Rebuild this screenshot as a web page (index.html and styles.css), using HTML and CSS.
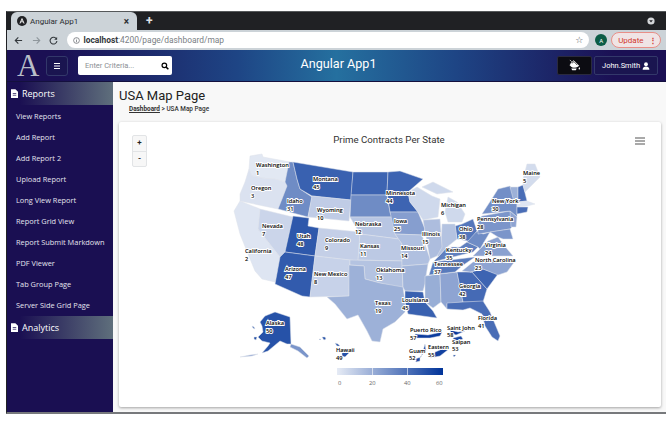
FILE: index.html
```html
<!DOCTYPE html>
<html>
<head>
  <title>Angular App1</title>
  <link rel="stylesheet" href="styles.css">
</head>
<body>
  <div class="window">
    <div class="tabstrip">
      <div class="tab">
        <svg class="tab-icon" viewBox="0 0 10 10"><circle cx="5" cy="5" r="5" fill="#202124"/><path d="M5 1.8 7.6 7.6H6.6L6.1 6.3H3.9L3.4 7.6H2.4ZM5 3.8 4.3 5.5H5.7Z" fill="#fff"/></svg>
        <span class="tab-title">Angular App1</span>
        <span class="tab-close">&#215;</span>
      </div>
      <span class="tab-new">+</span>
      <svg class="chrome-menu" viewBox="0 0 8 8"><circle cx="4" cy="4" r="3.6" fill="#d5d7da"/><path d="M2.2 3.2H5.8L4 5.4Z" fill="#202124"/></svg>
    </div>

    <div class="toolbar">
      <svg class="nav-icon" viewBox="0 0 10 10"><path d="M9 5H1.5M4.8 1.6 1.4 5 4.8 8.4" fill="none" stroke="#33383c" stroke-width="1.2"/></svg>
      <svg class="nav-icon" viewBox="0 0 10 10"><path d="M1 5H8.5M5.2 1.6 8.6 5 5.2 8.4" fill="none" stroke="#8f979c" stroke-width="1.2"/></svg>
      <svg class="nav-icon" viewBox="0 0 10 10"><path d="M8.4 3.4A3.8 3.8 0 1 0 8.8 5.6" fill="none" stroke="#33383c" stroke-width="1.2"/><path d="M9 1V4.2H5.8Z" fill="#33383c"/></svg>
      <div class="omnibox">
        <svg class="info-icon" viewBox="0 0 8 8"><circle cx="4" cy="4" r="3.3" fill="none" stroke="#5f6368" stroke-width=".8"/><path d="M4 3.4V6M4 2V2.8" stroke="#5f6368" stroke-width=".8"/></svg>
        <span class="url"><b>localhost</b>:4200/page/dashboard/map</span>
        <span class="star">&#9734;</span>
      </div>
      <span class="avatar">A</span>
      <span class="update">Update<span class="update-dots">&#8942;</span></span>
    </div>

    <div class="header">
      <span class="logo">A</span>
      <button class="menu-btn">
        <svg viewBox="0 0 8 8"><path d="M1 1.5H7M1 4H7M1 6.5H7" stroke="#fff" stroke-width="1.1"/></svg>
      </button>
      <div class="search">
        <span class="search-text">Enter Criteria...</span>
        <svg viewBox="0 0 10 10"><circle cx="4.2" cy="4.2" r="2.9" fill="none" stroke="#000" stroke-width="1.5"/><path d="M6.4 6.4 9.2 9.2" stroke="#000" stroke-width="1.8"/></svg>
      </div>
      <h1 class="app-title">Angular App1</h1>
      <button class="theme-btn">
        <svg viewBox="0 0 14 14"><path d="M2 1 4 3M3.5 4.4 6.2 1.8 11.6 7.2C9 9.4 4 9.8 2.2 6.6Z" fill="#fff" stroke="#fff" stroke-width=".8"/><path d="M4.2 4.6 6.4 2.8 10 6.6" fill="none" stroke="#000" stroke-width=".7"/><path d="M12.2 8.6C13.2 10 13.4 11.4 12.2 11.4 11 11.4 11.2 10 12.2 8.6ZM3.5 10.2H9.4L8.4 12H4.6Z" fill="#fff"/></svg>
      </button>
      <button class="user-btn">
        John.Smith
        <svg viewBox="0 0 10 10"><circle cx="5" cy="2.8" r="2.4" fill="#fff"/><path d="M.8 9.6C.8 6.6 2.6 5.6 5 5.6S9.2 6.6 9.2 9.6Z" fill="#fff"/></svg>
      </button>
    </div>

    <div class="content">
      <div class="sidebar">
        <div class="side-group">
          <svg viewBox="0 0 8 10"><path d="M0 0H5L8 3V10H0Z" fill="#fff"/><path d="M2 5H6M2 7H6" stroke="#1a0f52" stroke-width=".8"/></svg>
          Reports
        </div>
        <a class="side-link">View Reports</a>
        <a class="side-link">Add Report</a>
        <a class="side-link">Add Report 2</a>
        <a class="side-link">Upload Report</a>
        <a class="side-link">Long View Report</a>
        <a class="side-link">Report Grid View</a>
        <a class="side-link">Report Submit Markdown</a>
        <a class="side-link">PDF Viewer</a>
        <a class="side-link">Tab Group Page</a>
        <a class="side-link">Server Side Grid Page</a>
        <div class="side-group">
          <svg viewBox="0 0 8 10"><path d="M0 0H5L8 3V10H0Z" fill="#fff"/><path d="M2 5H6M2 7H6" stroke="#1a0f52" stroke-width=".8"/></svg>
          Analytics
        </div>
      </div>

      <div class="main">
        <h2 class="page-title">USA Map Page</h2>
        <div class="crumbs"><a>Dashboard</a> &gt; USA Map Page</div>
        <div class="card">
          <div class="zoom-btns">
            <span class="zoom-btn">+</span>
            <span class="zoom-btn">-</span>
          </div>
          <svg class="chart-menu" viewBox="0 0 10 8"><path d="M0 1H10M0 4H10M0 7H10" stroke="#555" stroke-width="1.1"/></svg>

          <svg class="map" viewBox="119 123 542 284" width="542" height="284">
            <defs>
              <linearGradient id="legend-fill">
                <stop offset="0" stop-color="#e6ebf5"/>
                <stop offset="1" stop-color="#003399"/>
              </linearGradient>
            </defs>
            <text class="chart-title" x="389" y="144">Prime Contracts Per State</text>

            <g class="states">
              <polygon fill="#e2e8f3" points="250,157 262,155 263,158 290,163 285,183 275,180 262,179 252,177 249,170"/>
              <polygon fill="#dbe2f0" points="249,170 252,177 262,179 275,180 285,183 287,187 282,200 278,210 240,202 240,195 245,183"/>
              <polygon fill="#dee5f2" points="240,202 260,210 258,230 280,258 275,283 262,280 255,272 248,255 240,235 234,212"/>
              <polygon fill="#cbd5ea" points="260,210 293,218 285,253 280,258 258,230"/>
              <polygon fill="#6f8cc5" points="289,163 293,163 297,180 300,190 312,198 308,218 278,210 282,200 287,187 285,183"/>
              <polygon fill="#3961b0" points="293,163 353,173 351,201 312,197 300,190 297,180"/>
              <polygon fill="#c0cce6" points="312,197 351,201 349,222 308,218"/>
              <polygon fill="#2e58ab" points="293,217 309,219 308,227 319,229 315,257 285,253"/>
              <polygon fill="#c4cfe7" points="319,229 360,233 358,262 315,257"/>
              <polygon fill="#325bad" points="285,253 315,257 310,298 302,297 275,285 280,258"/>
              <polygon fill="#c7d2e9" points="315,257 350,261 349,297 310,298"/>
              <polygon fill="#3d64b2" points="353,173 388,173 387,196 351,196"/>
              <polygon fill="#6f8cc5" points="351,196 387,196 390,213 392,218 350,218"/>
              <polygon fill="#b8c6e3" points="350,218 392,218 395,235 399,240 360,235"/>
              <polygon fill="#bcc9e4" points="360,235 399,240 402,245 402,262 358,261"/>
              <polygon fill="#b4c3e1" points="350,261 402,262 403,290 380,284 365,280 364,267 350,266"/>
              <polygon fill="#9db1d8" points="349,266 364,267 365,280 380,284 403,288 405,303 405,313 395,323 383,330 380,343 372,342 367,332 358,316 347,320 335,305 327,298 349,297"/>
              <polygon fill="#3d64b2" points="388,173 400,172 423,180 408,193 410,203 418,213 390,213 387,193"/>
              <polygon fill="#869ecf" points="390,213 418,213 425,230 422,236 395,235"/>
              <polygon fill="#b0c0e0" points="395,235 422,236 430,260 428,265 402,267 402,245"/>
              <polygon fill="#a2b5da" points="402,267 428,265 426,277 425,285 423,292 405,292 403,288"/>
              <polygon fill="#3961b0" points="405,292 423,293 425,303 433,312 437,319 408,315 405,303"/>
              <polygon fill="#98aed6" points="425,277 440,275 441,303 433,309 425,303"/>
              <polygon fill="#8ea4d2" points="440,275 457,273 463,303 447,305 447,310 441,303"/>
              <polygon fill="#456ab5" points="457,273 472,273 487,290 483,303 463,303"/>
              <polygon fill="#496db6" points="447,304 463,303 483,302 490,313 500,337 498,342 492,338 485,327 482,315 470,309 463,311 447,310"/>
              <polygon fill="#3d64b2" points="470,273 483,270 498,275 487,290 472,273"/>
              <polygon fill="#8ea4d2" points="462,272 473,263 510,260 515,262 507,273 498,276 483,270 470,273"/>
              <polygon fill="#587abc" points="429,276 433,263 475,258 462,267 455,273"/>
              <polygon fill="#6080bf" points="438,258 447,248 460,248 467,243 478,248 473,253 433,263"/>
              <polygon fill="#8aa1d0" points="473,257 480,250 488,242 498,238 503,245 513,257"/>
              <polygon fill="#6f8cc5" points="467,243 473,235 478,232 483,235 490,233 480,250 478,248"/>
              <polygon fill="#5476bb" points="455,227 462,225 473,220 477,232 468,242 457,240"/>
              <polygon fill="#b4c3e1" points="442,225 455,225 457,240 447,248 438,258 437,255 441,247"/>
              <polygon fill="#adbdde" points="423,221 440,220 442,248 437,257 430,260 425,232"/>
              <polygon fill="#cfd9ec" points="408,193 417,188 432,197 440,200 438,218 423,221 418,213 410,203"/>
              <polygon fill="#cfd9ec" points="448,198 457,203 465,215 462,223 448,223 445,213"/>
              <polygon fill="#cfd9ec" points="422,188 433,183 453,193 437,195"/>
              <polygon fill="#7b95ca" points="478,220 482,217 510,212 515,225 510,230 478,235"/>
              <polygon fill="#738fc7" points="482,215 493,198 498,190 510,187 517,203 517,218 510,212"/>
              <polygon fill="#8ea4d2" points="510,212 517,218 516,228 511,228"/>
              <polygon fill="#7b95ca" points="490,233 510,230 513,240 503,240 498,238"/>
              <polygon fill="#9db1d8" points="510,188 518,188 518,203 514,203"/>
              <polygon fill="#496db6" points="518,188 523,186 527,202 518,203"/>
              <polygon fill="#d3dced" points="523,180 527,165 535,165 540,178 530,188 525,193 523,186"/>
              <polygon fill="#dee5f2" points="517,203 527,202 535,205 527,207 517,208"/>
              <polygon fill="#496db6" points="517,208 528,208 527,213 517,215"/>
              <polygon fill="#2652a8" points="265,317 275,313 290,318 291,345 287,345 280,342 274,347 268,352 262,354 268,347 270,344 262,342 258,338 263,333 262,327 260,323"/>
              <polygon fill="#7b95ca" points="291,345 300,348 309,357 307,359 298,352 290,348"/>
              <polygon fill="#8ea4d2" points="240,358 250,356 258,355 252,357"/>
              <polygon fill="#2652a8" points="252,327 254,328 255,330 253,329"/>
              <polygon fill="#2652a8" points="254,338 257,338 256,341 254,340"/>
              <polygon fill="#2652a8" points="319,340 321,340 320,341"/>
              <polygon fill="#2652a8" points="322,338 325,338 326,340 324,341"/>
              <polygon fill="#2652a8" points="335,344 338,345 340,347 337,347"/>
              <polygon fill="#2652a8" points="342,352 347,352 349,354 345,358 342,357"/>
              <polygon fill="#0c3c9e" points="415,335 428,336 442,333 440,337 430,339 416,339"/>
              <polygon fill="#08399c" points="450,331 458,333 465,332 456,336 451,334"/>
              <polygon fill="#1b49a4" points="453,339 461,337 463,340 454,343"/>
              <polygon fill="#1b49a4" points="453,356 456,356 454,358"/>
              <polygon fill="#1342a1" points="428,356 440,351 447,346 449,350 440,357 430,359"/>
              <polygon fill="#1b49a4" points="415,360 421,358 423,352 425,345 426,352 420,358 420,362 416,363"/>
            </g>

            <g class="labels">
              <text x="256" y="168">Washington</text><text x="256" y="176">1</text>
              <text x="251" y="191">Oregon</text><text x="251" y="199">3</text>
              <text x="313" y="182">Montana</text><text x="313" y="190">45</text>
              <text x="287" y="204">Idaho</text><text x="287" y="212">31</text>
              <text x="317" y="213">Wyoming</text><text x="317" y="221">10</text>
              <text x="262" y="229">Nevada</text><text x="262" y="237">7</text>
              <text x="297" y="239">Utah</text><text x="297" y="247">48</text>
              <text x="325" y="243">Colorado</text><text x="325" y="251">9</text>
              <text x="245" y="254">California</text><text x="245" y="262">2</text>
              <text x="285" y="272">Arizona</text><text x="285" y="280">47</text>
              <text x="314" y="277">New Mexico</text><text x="314" y="285">8</text>
              <text x="355" y="227">Nebraska</text><text x="355" y="235">12</text>
              <text x="360" y="249">Kansas</text><text x="360" y="257">11</text>
              <text x="386" y="196">Minnesota</text><text x="386" y="204">44</text>
              <text x="394" y="224">Iowa</text><text x="394" y="232">25</text>
              <text x="422" y="237">Illinois</text><text x="422" y="245">15</text>
              <text x="401" y="251">Missouri</text><text x="401" y="259">14</text>
              <text x="376" y="273">Oklahoma</text><text x="376" y="281">13</text>
              <text x="375" y="306">Texas</text><text x="375" y="314">19</text>
              <text x="441" y="208">Michigan</text><text x="441" y="216">6</text>
              <text x="459" y="232">Ohio</text><text x="459" y="240">38</text>
              <text x="446" y="253">Kentucky</text><text x="446" y="261">35</text>
              <text x="434" y="267">Tennessee</text><text x="434" y="275">37</text>
              <text x="459" y="289">Georgia</text><text x="459" y="297">42</text>
              <text x="402" y="303">Louisiana</text><text x="402" y="311">45</text>
              <text x="478" y="321">Florida</text><text x="478" y="329">41</text>
              <text x="523" y="176">Maine</text><text x="523" y="184">5</text>
              <text x="492" y="204">New York</text><text x="492" y="212">30</text>
              <text x="477" y="222">Pennsylvania</text><text x="477" y="230">28</text>
              <text x="485" y="248">Virginia</text><text x="485" y="256">24</text>
              <text x="475" y="263">North Carolina</text><text x="475" y="271">23</text>
              <text x="266" y="326">Alaska</text><text x="266" y="334">50</text>
              <text x="336" y="353">Hawaii</text><text x="336" y="361">49</text>
              <text x="410" y="333">Puerto Rico</text><text x="410" y="341">57</text>
              <text x="447" y="331">Saint John</text><text x="447" y="338">58</text>
              <text x="452" y="345">Saipan</text><text x="452" y="352">53</text>
              <text x="428" y="350">Eastern</text><text x="428" y="358">55</text>
              <text x="409" y="354">Guam</text><text x="409" y="361">52</text>
            </g>

            <rect x="337" y="369" width="106" height="7" fill="url(#legend-fill)"/>
            <path d="M372.5 369V376M407.5 369V376" stroke="#fff" stroke-width=".6"/>
            <g class="legend-labels">
              <text x="338" y="386">0</text>
              <text x="369" y="386">20</text>
              <text x="404" y="386">40</text>
              <text x="436" y="386">60</text>
            </g>
          </svg>
        </div>
      </div>
    </div>
  </div>
</body>
</html>
```

FILE: styles.css
```css
* {
  box-sizing: border-box;
}

body {
  margin: 0;
  padding: 11px 6px 0;
  background-color: #ffffff;
  font-family: "Open Sans", Arial, sans-serif;
  overflow: hidden;
}

.window {
  display: flex;
  flex-direction: column;
  width: 660px;
  height: 403px;
  border-top: 1px solid #55585a;
  border-bottom: 2px solid #77797c;
  border-left: 1px solid #202124;
  background-color: #f8f8f8;
}

.tabstrip {
  display: flex;
  align-items: flex-end;
  height: 18px;
  background-color: #202124;
  padding-left: 4px;
}

.tab {
  display: flex;
  align-items: center;
  width: 126px;
  height: 18px;
  padding: 0 8px 0 6px;
  background-color: #ccd3d8;
  border-radius: 6px 6px 0 0;
  color: #2b2e31;
  font-family: Roboto, sans-serif;
  font-size: 8px;
}

.tab-icon {
  width: 10px;
  height: 10px;
  margin-right: 3px;
}

.tab-title {
  flex: 1;
}

.tab-close {
  font-size: 10px;
  font-weight: bold;
}

.tab-new {
  align-self: center;
  margin-left: 9px;
  color: #e0e2e4;
  font-family: Roboto, sans-serif;
  font-size: 12px;
  font-weight: bold;
}

.chrome-menu {
  align-self: center;
  width: 8px;
  height: 8px;
  margin-left: auto;
  margin-right: 11px;
}

.toolbar {
  display: flex;
  align-items: center;
  height: 20px;
  padding: 0 5px 0 7px;
  background-color: #ccd3d8;
}

.nav-icon {
  width: 9px;
  height: 9px;
  margin-right: 8.5px;
  flex-shrink: 0;
}

.omnibox {
  display: flex;
  align-items: center;
  width: 525px;
  height: 16px;
  padding: 0 6px;
  background-color: #ffffff;
  border-radius: 8px;
}

.info-icon {
  width: 7px;
  height: 7px;
  margin-right: 4px;
}

.url {
  flex: 1;
  color: #7a8084;
  font-family: Roboto, sans-serif;
  font-size: 8.4px;
}

.url b {
  color: #33383c;
  font-weight: bold;
}

.star {
  color: #4a4f53;
  font-family: "DejaVu Sans", sans-serif;
  font-size: 9px;
}

.avatar {
  display: flex;
  align-items: center;
  justify-content: center;
  width: 12px;
  height: 12px;
  margin-left: 6px;
  border-radius: 50%;
  background-color: #0b5c46;
  color: #ffffff;
  font-family: Roboto, sans-serif;
  font-size: 6px;
}

.update {
  display: flex;
  align-items: center;
  justify-content: space-between;
  width: 50px;
  height: 16px;
  margin-left: 4px;
  padding: 0 3px 0 6px;
  border: 1px solid #e88f88;
  border-radius: 8px;
  background-color: #f0e4e5;
  color: #d0392e;
  font-family: Roboto, sans-serif;
  font-size: 8px;
}

.update-dots {
  font-weight: bold;
}

.header {
  display: flex;
  align-items: center;
  height: 32px;
  padding-right: 8px;
  background: linear-gradient(to right, #1b1054 0%, #1b1054 8%, #1e4585 35%, #25709f 50%, #1e4585 68%, #1b1054 92%);
  border-bottom: 1px solid #14103e;
}

.logo {
  width: 29px;
  margin-left: 10px;
  color: #b9bec8;
  font-family: "Liberation Serif", serif;
  font-size: 31px;
  line-height: 30px;
}

.menu-btn {
  display: flex;
  align-items: center;
  justify-content: center;
  width: 22px;
  height: 20px;
  padding: 0;
  background-color: #1a1550;
  border: 1px solid #33386a;
  border-radius: 3px;
}

.menu-btn svg {
  width: 8px;
  height: 8px;
}

.search {
  display: flex;
  align-items: center;
  justify-content: space-between;
  width: 94px;
  height: 19px;
  margin-left: 10px;
  padding: 0 3px 0 7px;
  background-color: #ffffff;
  border-radius: 2px;
}

.search-text {
  color: #8b8f94;
  font-family: Roboto, sans-serif;
  font-size: 7.5px;
}

.search svg {
  width: 8px;
  height: 8px;
}

.app-title {
  flex: 1;
  margin: 0 0 5px;
  padding-right: 52px;
  color: #ffffff;
  font-family: Roboto, sans-serif;
  font-size: 12.6px;
  font-weight: 400;
  text-align: center;
}

.theme-btn {
  display: flex;
  align-items: center;
  justify-content: center;
  width: 35px;
  height: 19px;
  padding: 0;
  background-color: #0c0c12;
  border: 1px solid #2a2a3e;
  border-radius: 2px;
}

.theme-btn svg {
  width: 13px;
  height: 13px;
}

.user-btn {
  display: flex;
  align-items: center;
  justify-content: space-between;
  width: 64px;
  height: 19px;
  margin-left: 2px;
  padding: 0 7px;
  background-color: #1a1550;
  border: 1px solid #33386a;
  border-radius: 2px;
  color: #ffffff;
  font-family: Roboto, sans-serif;
  font-size: 7.5px;
}

.user-btn svg {
  width: 8px;
  height: 8px;
}

.content {
  display: flex;
  flex: 1;
  min-height: 0;
}

.sidebar {
  display: flex;
  flex-direction: column;
  width: 106px;
  flex-shrink: 0;
  background-color: #1a0f52;
  color: #ffffff;
}

.side-group {
  display: flex;
  align-items: center;
  height: 23px;
  padding-left: 4px;
  background: linear-gradient(to right, #1a0f52 0%, #1a0f52 12%, #5f6f7c 100%);
  font-size: 9px;
}

.side-group svg {
  width: 7px;
  height: 9px;
  margin-right: 4px;
}

.side-link {
  display: flex;
  align-items: center;
  height: 21.1px;
  padding-left: 9px;
  color: #e4e4ee;
  font-size: 7.4px;
}

.main {
  flex: 1;
  padding: 5px 6px 7px;
  min-width: 0;
}

.page-title {
  margin: 0;
  color: #222222;
  font-family: Roboto, sans-serif;
  font-size: 13px;
  font-weight: 400;
  line-height: 18px;
}

.crumbs {
  height: 17px;
  padding-left: 10px;
  color: #333333;
  font-family: Roboto, sans-serif;
  font-size: 6.4px;
  font-weight: 500;
  line-height: 8px;
}

.crumbs a {
  font-weight: 700;
  text-decoration: underline;
}

.card {
  position: relative;
  width: 542px;
  height: 285px;
  background-color: #ffffff;
  border-radius: 2px;
  box-shadow: 0 1px 3px rgba(0, 0, 0, 0.35);
}

.zoom-btns {
  position: absolute;
  left: 13px;
  top: 13px;
  display: flex;
  flex-direction: column;
  width: 15px;
  border: 1px solid #e2e4e6;
  border-radius: 2px;
  background-color: #f7f7f7;
}

.zoom-btn {
  height: 15px;
  color: #222222;
  font-family: Roboto, sans-serif;
  font-size: 8px;
  font-weight: bold;
  line-height: 14px;
  text-align: center;
}

.zoom-btn + .zoom-btn {
  border-top: 1px solid #e2e4e6;
}

.chart-menu {
  position: absolute;
  right: 16px;
  top: 15px;
  width: 10px;
  height: 8px;
}

.map {
  display: block;
}

.chart-title {
  fill: #333333;
  font-family: Roboto, sans-serif;
  font-size: 9.7px;
  text-anchor: middle;
}

.states polygon {
  stroke: #dfe3ea;
  stroke-width: 0.5;
}

.labels text {
  fill: #000000;
  stroke: #ffffff;
  stroke-width: 1.8px;
  paint-order: stroke;
  font-family: "Open Sans", sans-serif;
  font-size: 5.7px;
  font-weight: 600;
}

.legend-labels text {
  fill: #666666;
  font-family: "Open Sans", sans-serif;
  font-size: 5.8px;
}
```
